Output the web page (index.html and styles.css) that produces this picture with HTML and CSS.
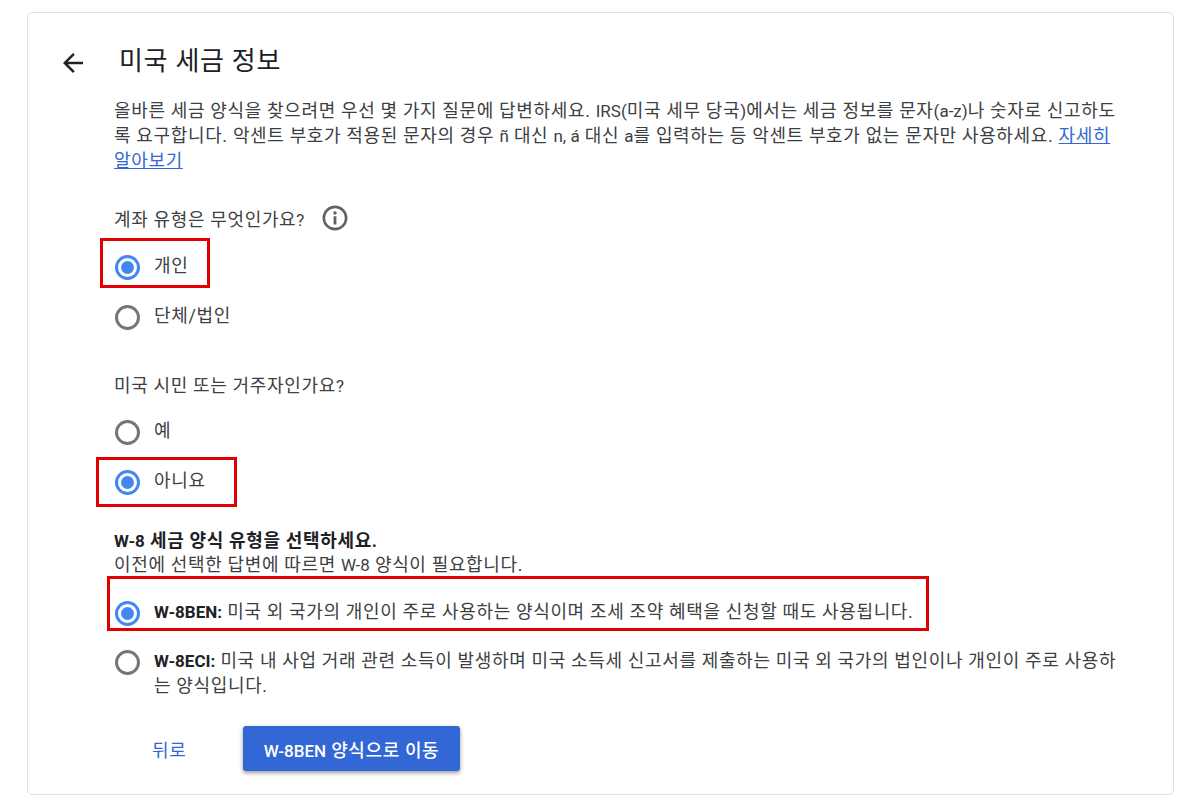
FILE: index.html
```html
<!DOCTYPE html>
<html lang="ko">
<head>
<meta charset="utf-8">
<title>미국 세금 정보</title>
<link rel="stylesheet" href="styles.css">
</head>
<body>
<main class="card">
  <header class="head">
    <svg class="back" viewBox="0 0 24 24" width="30" height="30"><path d="M20 11H7.83l5.59-5.59L12 4l-8 8 8 8 1.41-1.41L7.83 13H20v-2z"/></svg>
    <h1 class="title">미국 세금 정보</h1>
  </header>
  <div class="content">
    <p class="intro">올바른 세금 양식을 찾으려면 우선 몇 가지 질문에 답변하세요. <span class="lt">IRS(</span>미국 세무 당국<span class="lt">)</span>에서는 세금 정보를 문자<span class="lt">(a-z)</span>나 숫자로 신고하도록 요구합니다. 악센트 부호가 적용된 문자의 경우 <span class="lt">ñ</span> 대신 <span class="lt">n, á</span> 대신 <span class="lt">a</span>를 입력하는 등 악센트 부호가 없는 문자만 사용하세요. <a class="link" href="#">자세히 알아보기</a></p>

    <div class="question q1"><span>계좌 유형은 무엇인가요<span class="lt">?</span></span>
      <svg class="info" viewBox="0 0 24 24" width="26" height="26"><circle cx="12" cy="12" r="10.3" fill="none" stroke="#5f6368" stroke-width="2.4"/><circle cx="12" cy="7.4" r="1.6" fill="#5f6368"/><rect x="10.7" y="10.4" width="2.6" height="7.6" fill="#5f6368"/></svg>
    </div>
    <div class="option on r1"><span class="radio"></span><span class="label">개인</span><span class="mark m1"></span></div>
    <div class="option r2"><span class="radio"></span><span class="label">단체/법인</span></div>

    <div class="question q2"><span>미국 시민 또는 거주자인가요<span class="lt">?</span></span></div>
    <div class="option r3"><span class="radio"></span><span class="label">예</span></div>
    <div class="option on r4"><span class="radio"></span><span class="label">아니요</span><span class="mark m2"></span></div>

    <div class="form-type">
      <strong class="form-head"><span class="lt">W-8</span> 세금 양식 유형을 선택하세요.</strong>
      <div>이전에 선택한 답변에 따르면 <span class="lt">W-8</span> 양식이 필요합니다.</div>
    </div>
    <div class="option on r5"><span class="radio"></span><span class="label"><b class="lt">W-8BEN:</b> 미국 외 국가의 개인이 주로 사용하는 양식이며 조세 조약 혜택을 신청할 때도 사용됩니다.</span><span class="mark m3"></span></div>
    <div class="option r6"><span class="radio"></span><span class="label"><b class="lt">W-8ECI:</b> 미국 내 사업 거래 관련 소득이 발생하며 미국 소득세 신고서를 제출하는 미국 외 국가의 법인이나 개인이 주로 사용하는 양식입니다.</span></div>

    <div class="actions">
      <a class="back-link" href="#">뒤로</a>
      <button class="primary" type="button"><span class="lt">W-8BEN</span> 양식으로 이동</button>
    </div>
  </div>
</main>
</body>
</html>
```
FILE: styles.css
```css
* { box-sizing: border-box; }
html, body { margin: 0; height: 100%; background: #fff; overflow: hidden; }
body {
  padding: 12px 25px 10px 27px;
  font-family: Roboto, "Noto Sans CJK KR", sans-serif;
  font-size: 18px;
  letter-spacing: 0.65px;
  color: #3c4043;
}
.lt { font-size: 17px; letter-spacing: 0; line-height: 0; }
.card {
  width: 1147px;
  height: 783px;
  border: 1px solid #e0e0e0;
  border-radius: 5px;
  padding: 0 52px 0 86px;
}
.head { display: flex; align-items: center; height: 48px; margin: 24px 0 0 -54px; }
.back { fill: #202124; margin: 4px 0 0 -2px; flex: none; }
.title { margin: 0 0 0 31px; font-size: 26px; font-weight: 400; letter-spacing: 0.7px; color: #202124; line-height: 48px; }
.content { width: 1006px; word-break: break-all; }
.intro { margin: 13px 0 0; line-height: 25px; }
.link { color: #3367d6; }
.question { display: flex; align-items: center; height: 26px; }
.q1 { margin-top: 32px; }
.q2 { margin-top: 43px; }
.info { margin-left: 18px; }
.option { position: relative; display: flex; padding-left: 40px; line-height: 25px; }
.radio {
  position: absolute; left: 1px; top: 2px;
  width: 25px; height: 25px;
  border: 3px solid #757575; border-radius: 50%;
}
.on .radio { border-color: #4285f4; }
.on .radio::after {
  content: ""; position: absolute; left: 3px; top: 3px;
  width: 13px; height: 13px; border-radius: 50%; background: #4285f4;
}
.r1 { margin-top: 22px; }
.r2 { margin-top: 25px; }
.r3 { margin-top: 21px; }
.r4 { margin-top: 25px; }
.r5 { margin-top: 22px; }
.r6 { margin-top: 24px; }
b, .form-head { font-weight: 700; color: #202124; }
.form-type { margin-top: 36px; line-height: 24px; }
.form-head { display: block; }
.mark { position: absolute; border: 3px solid #e10000; pointer-events: none; }
.m1 { left: -14px; top: -15px; width: 110px; height: 50px; }
.m2 { left: -18px; top: -11px; width: 141px; height: 50px; }
.m3 { left: -7px; top: -23px; width: 822px; height: 55px; }
.actions { display: flex; align-items: center; margin-top: 28px; }
.back-link { margin-left: 38px; width: 91px; color: #3367d6; text-decoration: none; font-weight: 400; }
.primary {
  width: 217px; height: 45px; border: 0; border-radius: 3px;
  background: #3367d6; color: #fff; font: 500 18px Roboto, "Noto Sans CJK KR", sans-serif; letter-spacing: .6px;
  box-shadow: 0 2px 4px rgba(0,0,0,.4);
}
```
